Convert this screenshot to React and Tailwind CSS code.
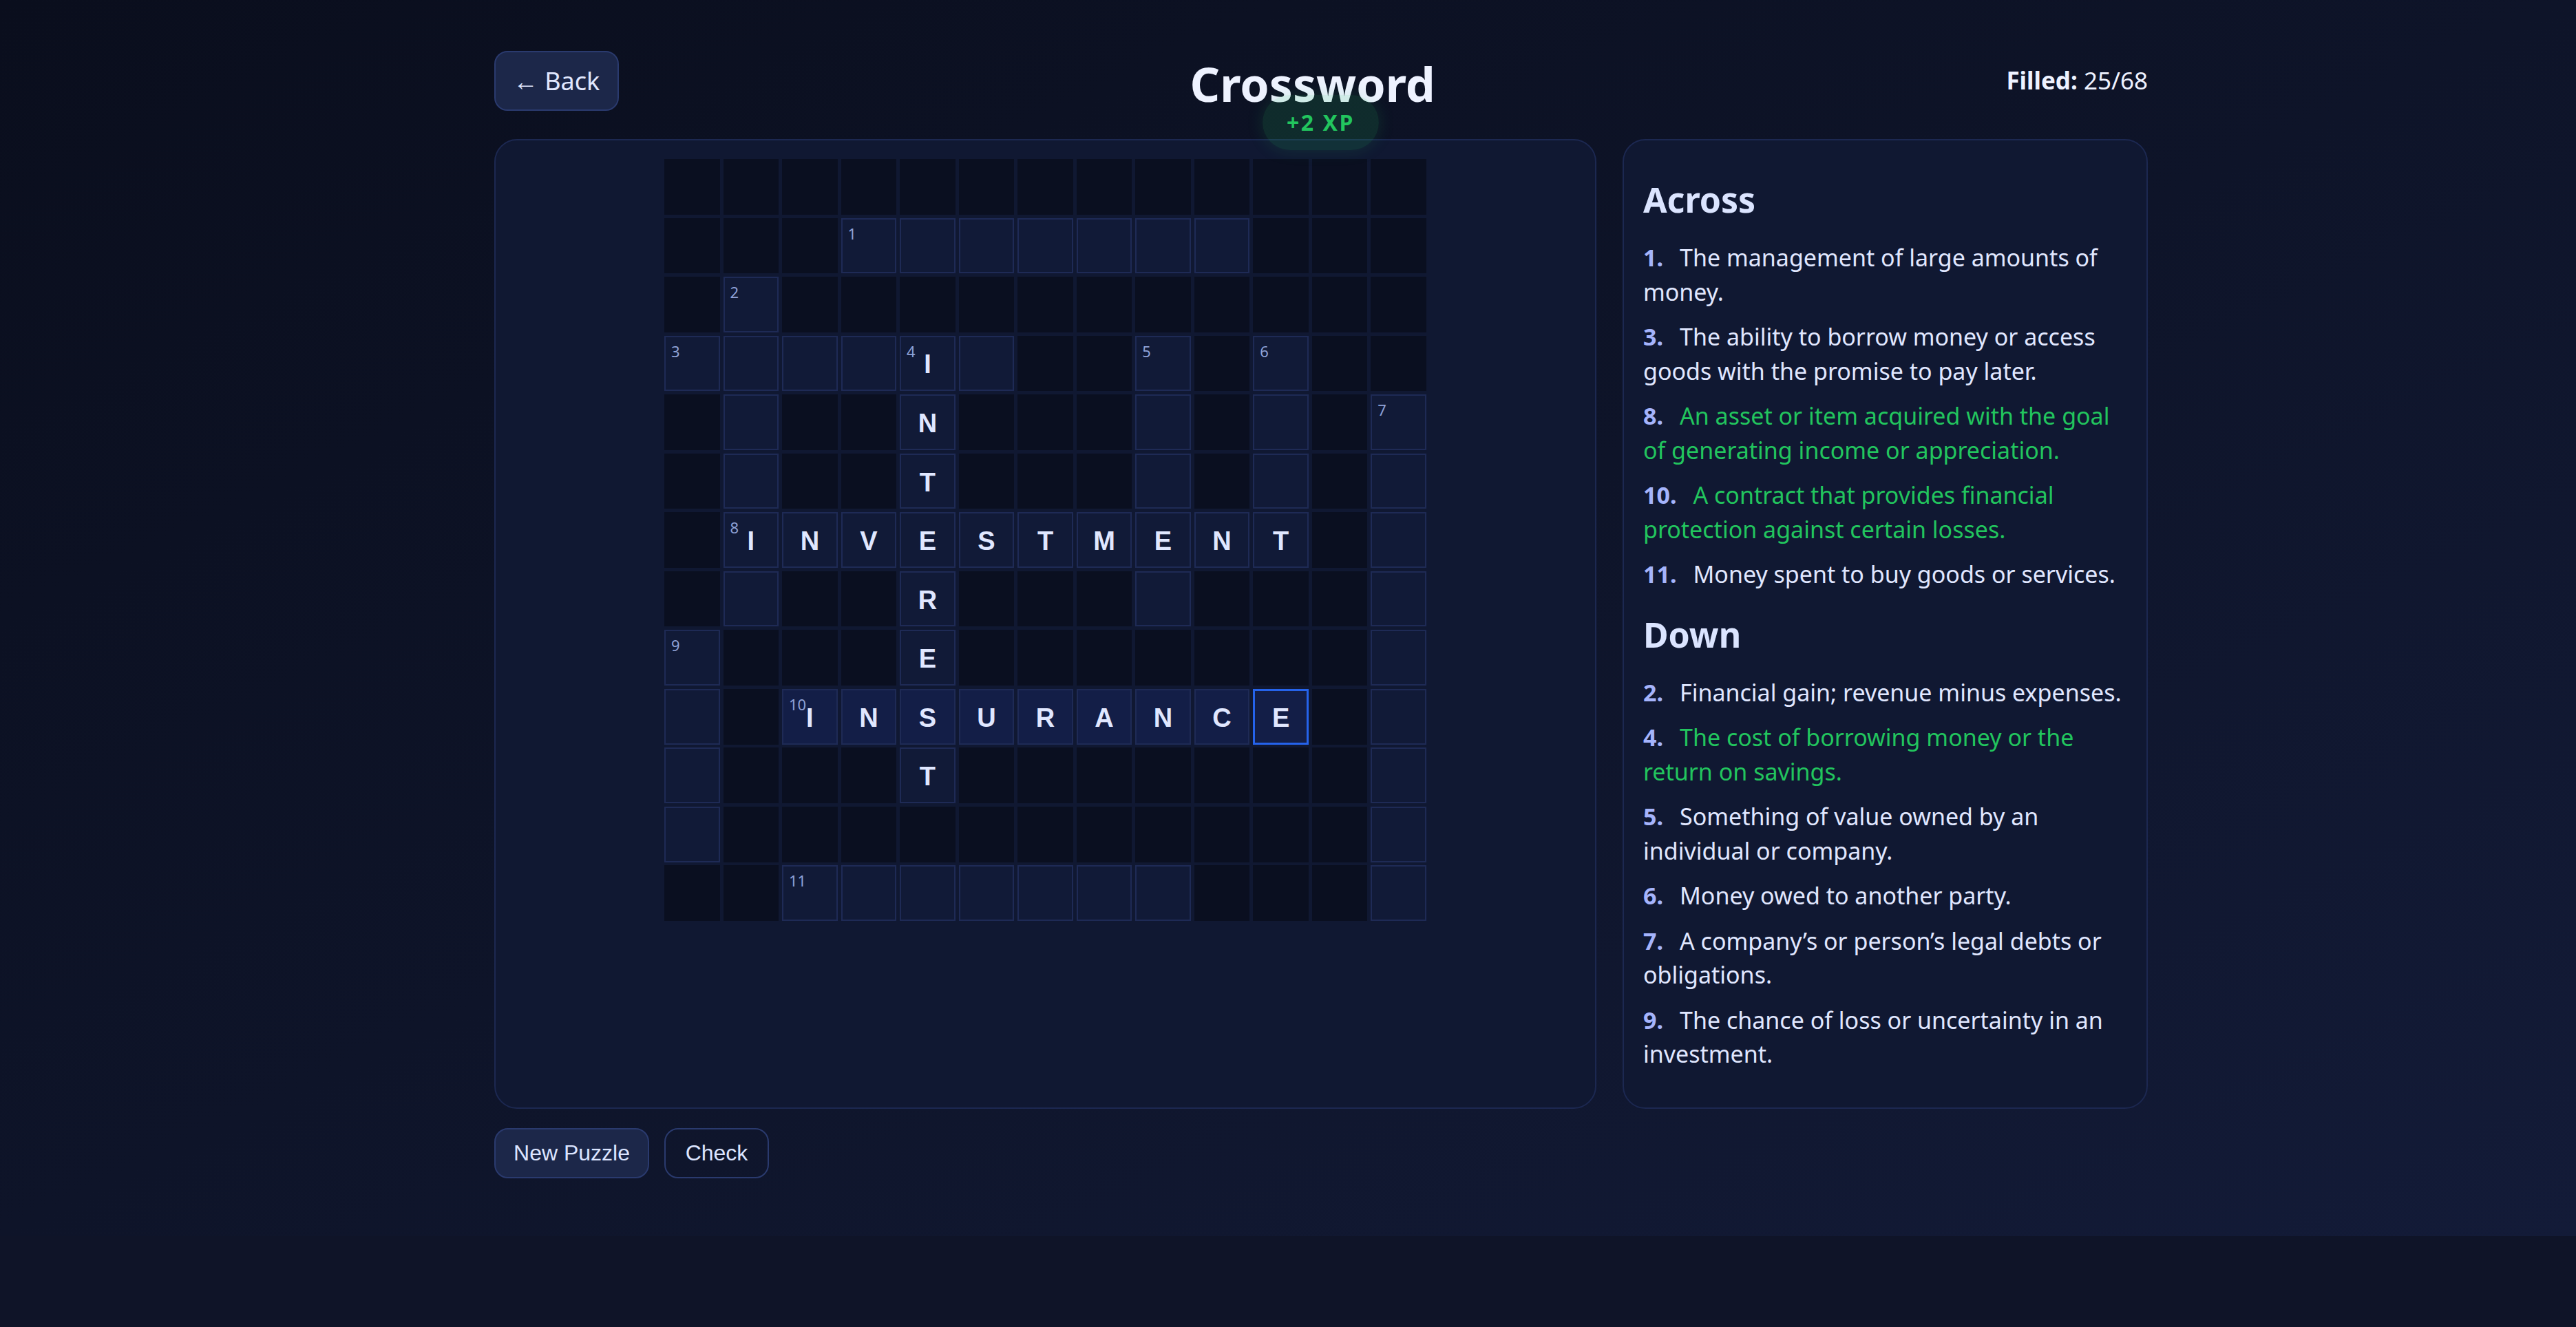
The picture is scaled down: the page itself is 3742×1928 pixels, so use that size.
import React from 'react';

const rows = [
  '#############',
  '###.......###',
  '#.###########',
  '....I.##.#.##',
  '#.##N###.#.#.',
  '#.##T###.#.#.',
  '#INVESTMENT#.',
  '#.##R###.###.',
  '.###E#######.',
  '.#INSURANCE#.',
  '.###T#######.',
  '.###########.',
  '##.......###.',
];

const numbers = {
  '1-3': 1, '2-1': 2, '3-0': 3, '3-4': 4, '3-8': 5, '3-10': 6,
  '4-12': 7, '6-1': 8, '8-0': 9, '9-2': 10, '12-2': 11,
};

const across = [
  { n: 1, text: 'The management of large amounts of money.' },
  { n: 3, text: 'The ability to borrow money or access goods with the promise to pay later.' },
  { n: 8, text: 'An asset or item acquired with the goal of generating income or appreciation.', done: true },
  { n: 10, text: 'A contract that provides financial protection against certain losses.', done: true },
  { n: 11, text: 'Money spent to buy goods or services.' },
];

const down = [
  { n: 2, text: 'Financial gain; revenue minus expenses.' },
  { n: 4, text: 'The cost of borrowing money or the return on savings.', done: true },
  { n: 5, text: 'Something of value owned by an individual or company.' },
  { n: 6, text: 'Money owed to another party.' },
  { n: 7, text: 'A company’s or person’s legal debts or obligations.' },
  { n: 9, text: 'The chance of loss or uncertainty in an investment.' },
];

function Cell({ r, c, ch }) {
  if (ch === '#') {
    return <div className="aspect-square bg-[#0a0f20]" />;
  }
  const num = numbers[`${r}-${c}`];
  const inWord = r === 9 && c >= 2 && c <= 10;
  const active = r === 9 && c === 10;
  let cls = 'relative aspect-square flex items-center justify-center ';
  if (active) cls += 'border-[3px] border-[#2563eb] bg-[#131e47]';
  else if (inWord) cls += 'border-2 border-[#1e2a55] bg-[#131e47]';
  else cls += 'border-2 border-[#1e2a55] bg-[#111a37]';
  return (
    <div className={cls}>
      {num && (
        <span className="absolute top-[9px] left-[8px] text-[22px] leading-none text-[#8fa2d8]">
          {num}
        </span>
      )}
      {ch !== '.' && (
        <span className="font-['Liberation_Sans',Arial,sans-serif] font-bold text-[38px] leading-none text-[#e0e7ff] uppercase mt-[3px]">
          {ch}
        </span>
      )}
    </div>
  );
}

function ClueList({ items }) {
  return (
    <ul className="flex flex-col gap-[16px]">
      {items.map((it) => (
        <li
          key={it.n}
          className={`text-[34px] leading-[49.5px] ${it.done ? 'text-[#22c55e]' : 'text-[#e0e7ff]'}`}
        >
          <strong className="font-bold text-[#a5b4fc] mr-[24px]">{it.n}.</strong>
          {it.text}
        </li>
      ))}
    </ul>
  );
}

export default function App() {
  return (
    <div className="min-h-screen bg-[#0f1428] font-['Noto_Sans','Open_Sans',sans-serif]">
      <div className="bg-gradient-to-br from-[#0a0e1d] via-[#0e1429] to-[#131b38] pt-[74px] pb-[84px]">
        <div className="pl-[718px]">
          <div className="w-[2402px]">
            {/* Header */}
            <div className="relative flex items-center justify-between h-[87px]">
              <button className="w-[181px] h-[87px] flex items-center justify-center rounded-[19px] border-2 border-[#2a3a6e] bg-[#1c2749] text-[36px] text-[#e0e7ff]">
                ← Back
              </button>
              <h1 className="text-[68px] font-bold leading-[1.2] text-[#eef2ff] mt-[8px]">Crossword</h1>
              <div className="text-[35px] text-[#eef2ff]">
                <span className="font-bold">Filled:</span> 25/68
              </div>
              <div className="absolute left-[1116px] top-[64px] w-[169px] h-[80px] rounded-full bg-[#22c55e]/15 shadow-[0_0_24px_rgba(34,197,94,0.15)] flex items-center justify-center">
                <span className="text-[32px] font-bold tracking-[0.08em] text-[#22c55e]">+2 XP</span>
              </div>
            </div>

            {/* Main */}
            <div className="mt-[41px] grid grid-cols-[1601px_763px] gap-[38px]">
              <div className="rounded-[33px] border-2 border-[#1c2851] bg-[#101832] pt-[27px] flex justify-center items-start">
                <div className="w-[1107px] grid grid-cols-[repeat(13,minmax(0,1fr))] gap-[4.8px]">
                  {rows.map((row, r) =>
                    row.split('').map((ch, c) => <Cell key={`${r}-${c}`} r={r} c={c} ch={ch} />)
                  )}
                </div>
              </div>

              <div className="rounded-[33px] border-2 border-[#1c2851] bg-[#101832] p-[28px] pb-[52px]">
                <h3 className="mt-[28px] mb-[30px] text-[50px] font-bold leading-[1.2] text-[#dbe4ff]">Across</h3>
                <ClueList items={across} />
                <h3 className="mt-[32px] mb-[30px] text-[50px] font-bold leading-[1.2] text-[#dbe4ff]">Down</h3>
                <ClueList items={down} />
              </div>
            </div>

            {/* Actions */}
            <div className="mt-[28px] flex gap-[22px]">
              <button className="w-[225px] h-[73px] rounded-[20px] border-2 border-[#2a3a6e] bg-[#1c2749] font-['Liberation_Sans',Arial,sans-serif] text-[32px] text-[#dbe4ff]">
                New Puzzle
              </button>
              <button className="w-[152px] h-[73px] rounded-[20px] border-2 border-[#2a3a6e] bg-transparent font-['Liberation_Sans',Arial,sans-serif] text-[32px] text-[#dbe4ff]">
                Check
              </button>
            </div>
          </div>
        </div>
      </div>
    </div>
  );
}
